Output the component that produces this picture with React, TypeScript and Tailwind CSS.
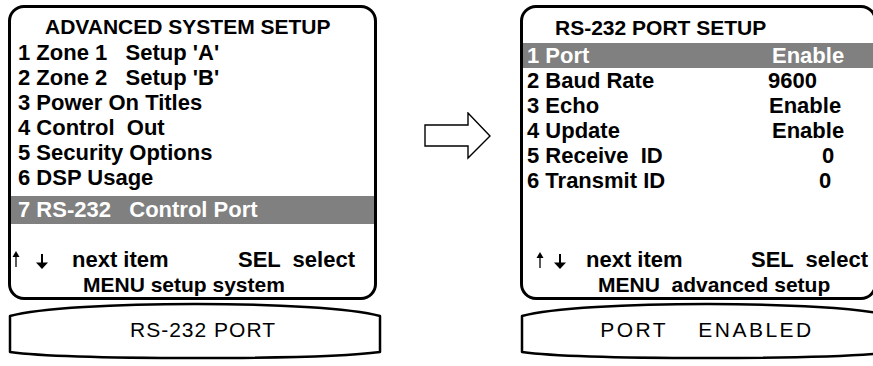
import React from "react";

const UpArrow = () => (
  <svg width="8" height="16" viewBox="0 0 8 16" className="block">
    <path d="M4 16V4" stroke="black" strokeWidth="1.3" />
    <path d="M4 0L7.5 6H0.5Z" fill="black" />
  </svg>
);

const DownArrow = () => (
  <svg width="12" height="15" viewBox="0 0 12 15" className="block">
    <path d="M6 0V9" stroke="black" strokeWidth="2" />
    <path d="M0 8.5H12L6 15Z" fill="black" />
  </svg>
);

const Frame = () => (
  <svg width="374" height="62" viewBox="0 0 374 62" className="absolute inset-0">
    <path
      d="M2 17C60 1 314 1 372 17L372 53C314 61 60 61 2 53Z"
      fill="white"
      stroke="black"
      strokeWidth="2.5"
      strokeLinejoin="round"
    />
  </svg>
);

const leftRows = [
  "1 Zone 1   Setup 'A'",
  "2 Zone 2   Setup 'B'",
  "3 Power On Titles",
  "4 Control  Out",
  "5 Security Options",
  "6 DSP Usage",
];

const rightRows: [string, string, string][] = [
  ["2 Baud Rate", "9600", "pl-[0px]"],
  ["3 Echo", "Enable", "pl-[1px]"],
  ["4 Update", "Enable", "pl-[4px]"],
  ["5 Receive  ID", "0", "pl-[54px]"],
  ["6 Transmit ID", "0", "pl-[51px]"],
];

export default function App() {
  return (
    <div className="w-[873px] h-[366px] overflow-hidden bg-white flex font-['Liberation_Sans',Arial,sans-serif] text-black">
      {/* left screen */}
      <div className="ml-[8px] mt-[5px] w-[374px] shrink-0 flex flex-col">
        <div className="w-[369px] h-[295px] border-[3px] border-black rounded-[16px] flex flex-col overflow-hidden font-bold text-[22px] leading-[25px] whitespace-pre">
          <div className="pt-[6px] pl-[34px] h-[32px] text-[21px]">ADVANCED SYSTEM SETUP</div>
          {leftRows.map((r) => (
            <div key={r} className="pl-[7px] h-[25px]">
              {r}
            </div>
          ))}
          <div className="mt-[6px] h-[28px] leading-[28px] bg-[#808080] text-white pl-[7px]">
            7 RS-232   Control Port
          </div>
          <div className="mt-auto flex h-[25px]">
            <div className="ml-[1px] mt-[4px]">
              <UpArrow />
            </div>
            <div className="ml-[16px] mt-[7px]">
              <DownArrow />
            </div>
            <span className="ml-[24px]">next item</span>
            <span className="ml-auto mr-[19px]">SEL  select</span>
          </div>
          <div className="pl-[72px] h-[25px] text-[21px]">MENU setup system</div>
        </div>
        <div className="-mt-[1px] relative w-[374px] h-[62px]">
          <Frame />
          <div className="relative h-full flex items-center justify-center pl-[16px] text-[21px] tracking-[1px]">
            RS-232 PORT
          </div>
        </div>
      </div>

      {/* arrow */}
      <div className="ml-[42px] mt-[112px] shrink-0">
        <svg width="68" height="48" viewBox="0 0 68 48" className="block">
          <path
            d="M1 13H44V1L66 24L44 46V34H1Z"
            fill="white"
            stroke="black"
            strokeWidth="1.4"
          />
        </svg>
      </div>

      {/* right screen */}
      <div className="ml-[28px] mt-[5px] w-[374px] shrink-0 flex flex-col">
        <div className="w-[357px] h-[295px] border-[3px] border-black rounded-[16px] flex flex-col overflow-hidden font-bold text-[22px] leading-[25px] whitespace-pre">
          <div className="pt-[7px] pl-[32px] h-[35px] text-[21px]">RS-232 PORT SETUP</div>
          <div className="flex h-[25px] bg-[#808080] text-white pl-[4px]">
            <span className="w-[241px]">1 Port</span>
            <span className="pl-[4px]">Enable</span>
          </div>
          {rightRows.map(([l, v, p]) => (
            <div key={l} className="flex h-[25px] pl-[4px]">
              <span className="w-[241px]">{l}</span>
              <span className={p}>{v}</span>
            </div>
          ))}
          <div className="mt-auto flex h-[25px]">
            <div className="ml-[13px] mt-[5px]">
              <UpArrow />
            </div>
            <div className="ml-[10px] mt-[7px]">
              <DownArrow />
            </div>
            <span className="ml-[20px]">next item</span>
            <span className="ml-auto mr-[6px]">SEL  select</span>
          </div>
          <div className="pl-[75px] h-[25px] text-[21px]">MENU  advanced setup</div>
        </div>
        <div className="-mt-[1px] relative w-[374px] h-[62px]">
          <Frame />
          <div className="relative h-full flex items-center justify-center text-[21px] tracking-[2.5px]">
            <span>PORT</span>
            <span className="ml-[30px]">ENABLED</span>
          </div>
        </div>
      </div>
    </div>
  );
}
